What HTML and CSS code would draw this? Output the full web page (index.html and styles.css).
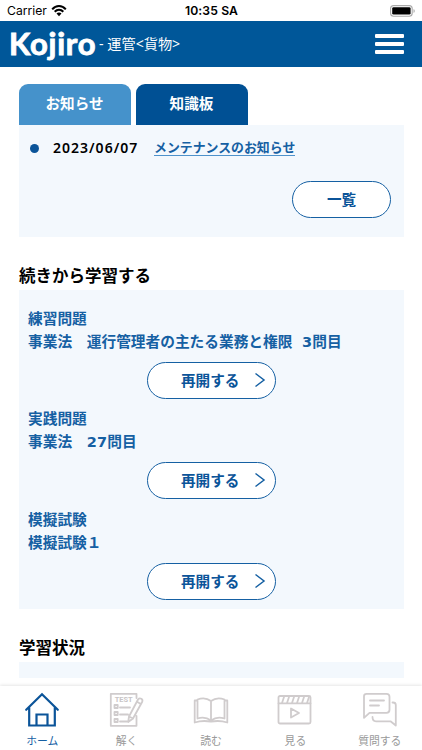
FILE: index.html
```html
<!DOCTYPE html>
<html lang="ja">
<head>
<meta charset="utf-8">
<meta name="viewport" content="width=device-width, initial-scale=1">
<title>Kojiro</title>
<link rel="stylesheet" href="styles.css">
</head>
<body>
<div class="status">
  <div class="carrier"><span>Carrier</span>
    <svg width="16" height="12" viewBox="0 0 16 12"><path d="M1.2 4.3C5-.1 11-.1 14.8 4.3M3.7 6.8c2.5-2.7 6.1-2.7 8.6 0" fill="none" stroke="#000" stroke-width="2"/><path d="M5.5 8.6c1.5-1.4 3.5-1.4 5 0L8 11.3z"/></svg>
  </div>
  <div class="time">10:35 SA</div>
  <svg class="battery" width="26" height="12" viewBox="0 0 26 12"><rect x=".6" y=".6" width="21.6" height="10.6" rx="3" fill="#fff" stroke="#aaa" stroke-width="1.1"/><rect x="2.2" y="2.2" width="18.4" height="7.4" rx="1.4"/><path d="M23.6 4v4c1.4-.5 1.4-3.500 0-4z" fill="#999"/></svg>
</div>
<header class="header">
  <span class="logo">Kojiro</span><span class="course">- 運管&lt;貨物&gt;</span>
  <div class="menu"><i></i><i></i><i></i></div>
</header>
<main class="main">
  <div class="tabs"><div class="tab active">お知らせ</div><div class="tab">知識板</div></div>
  <section class="panel news">
    <div class="news-row"><i class="dot"></i><span class="date">2023/06/07</span><a class="link">メンテナンスのお知らせ</a></div>
    <div class="button all">一覧</div>
  </section>
  <h2 class="title">続きから学習する</h2>
  <section class="panel resume">
    <div class="item"><p>練習問題</p><p>事業法　運行管理者の主たる業務と権限&nbsp; <span class="num">3</span>問目</p>
      <div class="button go">再開する<svg width="12" height="16" viewBox="0 0 12 16"><path d="M1.500 1.500 10 8l-8.500 6.500"/></svg></div></div>
    <div class="item"><p>実践問題</p><p>事業法　<span class="num">27</span>問目</p>
      <div class="button go">再開する<svg width="12" height="16" viewBox="0 0 12 16"><path d="M1.500 1.500 10 8l-8.500 6.500"/></svg></div></div>
    <div class="item"><p>模擬試験</p><p>模擬試験１</p>
      <div class="button go">再開する<svg width="12" height="16" viewBox="0 0 12 16"><path d="M1.500 1.500 10 8l-8.500 6.500"/></svg></div></div>
  </section>
  <h2 class="title">学習状況</h2>
  <section class="panel progress"></section>
</main>
<nav class="nav">
  <div class="nav-item current">
    <svg width="36" height="36" viewBox="0 0 36 36"><path d="M2.200 17.800 18 2.300l15.800 15.500M5.200 15.500v18h25.600v-18M12.500 33V22.500h11V33"/></svg>
    <span>ホーム</span></div>
  <div class="nav-item">
    <svg width="36" height="36" viewBox="0 0 36 36"><path d="M27.500 6V1.800H1.800v32h25.700V24M5.500 13h3.200v3H5.500zM5.500 20h3.200v3H5.500zM5.500 27h3.200v3H5.500zM11 15.500h10M11 22.500h8M11 29.500h7M20 24.500 29 7.500q1.500-1.800 3.300-.7t.8 3.200L24 26.500l-4.800 3.500zM28 9.800l3.800 2.200M20 24.500l4 2"/><text x="14.700" y="10" text-anchor="middle" textLength="18" lengthAdjust="spacingAndGlyphs">TEST</text></svg>
    <span>解く</span></div>
  <div class="nav-item">
    <svg width="36" height="36" viewBox="0 0 36 36"><path d="M18 9Q12 4.500 4.500 7.500v19q7.500-2.500 13.500 2 6-4.500 13.500-2v-19Q24 4.500 18 9zM18 9v19.500M4.500 8.500H1.700v22q8-2.500 16.300-.8 8.300-1.700 16.300.8v-22h-2.800"/></svg>
    <span>読む</span></div>
  <div class="nav-item">
    <svg width="36" height="36" viewBox="0 0 36 36"><rect x="1.500" y="4" width="32" height="27.500" rx="1.500"/><path d="M1.500 11.300h32M7 5 5 11M12 5l-2 6M17 5l-2 6M22 5l-2 6M27 5l-2 6M32 5l-2 6M14 16.500v9l8-4.500z"/></svg>
    <span>見る</span></div>
  <div class="nav-item">
    <svg width="36" height="36" viewBox="0 0 36 36"><path d="M4.500 1.800h20a3 3 0 0 1 3 3v13a3 3 0 0 1-3 3H7.500l-5.500 5V4.300q0-2.500 2.500-2.500zM8 8.500h14M8 13.500h9M30.500 10.500h.5q2.800 0 2.800 2.500v20.500L28.500 29.300H14q-3.500 0-3.500-4.300"/></svg>
    <span>質問する</span></div>
</nav>
</body>
</html>
```
FILE: styles.css
```css
* { box-sizing: border-box; }
body {
  margin: 0;
  height: 750px;
  overflow: hidden;
  display: flex;
  flex-direction: column;
  background: #fff;
  color: #000;
  font-family: "Noto Sans", "Noto Sans CJK JP", sans-serif;
}
svg { display: block; }
.status {
  height: 21px;
  flex: none;
  display: grid;
  grid-template-columns: 1fr auto 1fr;
  align-items: center;
  padding: 1px 6px 0 7px;
  font: 12.2px/20px Inter, sans-serif;
}
.carrier { display: flex; align-items: center; gap: 4px; }
.time { font-weight: 600; font-size: 12.2px; letter-spacing: .1px; }
.battery { justify-self: end; }
.header {
  height: 46px;
  flex: none;
  display: flex;
  align-items: center;
  padding: 0 18px 0 9px;
  background: #005799;
  color: #fff;
}
.logo { width: 90px; font: 700 31px/40px Lato, sans-serif; letter-spacing: .8px; margin-top: -3px; -webkit-text-stroke: .9px #fff; }
.course { font-size: 14.2px; line-height: 20px; white-space: nowrap; }
.menu { margin-left: auto; width: 29px; display: grid; gap: 4px; margin-top: -1px; }
.menu i { height: 4px; border-radius: 1px; background: #fff; }
.main { flex: 1; padding: 17px 18px 0 19px; min-height: 0; }
.tabs { display: flex; gap: 5px; height: 41px; }
.tab {
  width: 112px;
  border-radius: 9px 9px 0 0;
  background: #005094;
  color: #fff;
  text-align: center;
  font-weight: 700;
  font-size: 14.6px;
  line-height: 39px;
  padding-right: 1px;
}
.tab.active { background: #4592cb; }
.panel { background: #f3f8fd; }
.news { height: 112px; padding: 12px 13px 0 11px; }
.news-row { display: flex; align-items: center; height: 22px; }
.dot { width: 9px; height: 9px; border-radius: 50%; background: #0b5499; }
.date { width: 101px; margin-left: 14px; font-weight: 600; font-size: 14px; line-height: 20px; letter-spacing: 1px; margin-top: -1px; }
.link { color: #1560a3; font-weight: 700; font-size: 12.9px; line-height: 15px; border-bottom: 1px solid #4e92cb; }
.button {
  height: 37px;
  border: 1px solid #1560a3;
  border-radius: 19px;
  background: #fff;
  color: #0b5499;
  font-weight: 700;
  font-size: 14.6px;
  line-height: 20px;
  padding-bottom: 1px;
  display: flex;
  align-items: center;
}
.all { width: 99px; margin: 22px 0 0 auto; justify-content: center; }
.title { margin: 0; font-size: 16.5px; line-height: 24px; height: 53px; padding-top: 27px; font-weight: 700; }
.resume { height: 319px; padding: 17px 9px 0; }
.item { height: 100.3px; color: #1560a3; font-weight: 700; font-size: 14.7px; }
.item p { margin: 0; height: 22px; line-height: 22px; white-space: nowrap; }
.num { font: 700 14.5px/20px "DejaVu Sans", sans-serif; letter-spacing: .2px; }
.item p + p { word-spacing: 1px; padding-top: 1px; }
.go { width: 129px; margin: 11px 0 0 119px; padding-left: 33px; }
.go svg { margin-left: 15px; fill: none; stroke: #1560a3; stroke-width: 1.5; }
.progress { height: 16px; }
.nav {
  height: 64px;
  flex: none;
  display: grid;
  grid-template-columns: repeat(5, 1fr);
  background: #fff;
  box-shadow: 0 -1px 3px rgba(0, 0, 0, .1);
}
.nav-item { display: flex; flex-direction: column; align-items: center; padding-top: 6px; color: #999; font-size: 10.8px; line-height: 16px; gap: 5px; }
.nav-item svg { fill: none; stroke: #d0cccd; stroke-width: 1.8; stroke-linejoin: round; stroke-linecap: round; }
.nav-item text { fill: #c9c5c6; stroke: none; font: 700 8px Roboto, sans-serif; }
.nav-item.current { color: #1560a3; }
.nav-item.current svg { stroke: #0b5499; stroke-width: 2.2; stroke-linejoin: miter; }
```
